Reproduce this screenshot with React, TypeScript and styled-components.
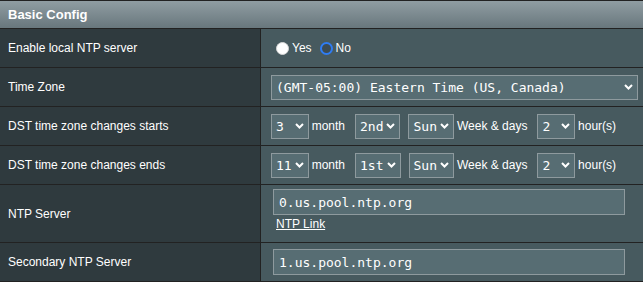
import React from "react";
import styled, { createGlobalStyle } from "styled-components";

const Global = createGlobalStyle`
  html, body { margin: 0; padding: 0; background: #475A5F; }
  body {
    font-family: "Liberation Sans", Arial, sans-serif;
    font-size: 12px;
    color: #fff;
  }
`;

const Table = styled.div`
  width: 643px;
  border-top: 1px solid #222;
`;

const Header = styled.div`
  height: 27px;
  display: flex;
  align-items: center;
  padding-left: 8px;
  background: linear-gradient(#909da2, #68777d);
  border-bottom: 1px solid #222;
  font: bold 13px "Liberation Sans", Arial, sans-serif;
  color: #fff;
`;

const Row = styled.div<{ $h: number }>`
  display: grid;
  grid-template-columns: 261px 1fr;
  height: ${(p) => p.$h}px;
  border-bottom: 1px solid #222;
`;

const Label = styled.div`
  display: flex;
  align-items: center;
  padding-left: 8px;
  background: #2F3A3E;
  border-right: 1px solid #222;
  color: #fff;
`;

const Cell = styled.div<{ $stack?: boolean }>`
  display: flex;
  flex-direction: ${(p) => (p.$stack ? "column" : "row")};
  align-items: ${(p) => (p.$stack ? "flex-start" : "center")};
  justify-content: ${(p) => (p.$stack ? "flex-start" : "flex-start")};
  padding-left: 10px;
  padding-top: ${(p) => (p.$stack ? "4px" : "0")};
  gap: ${(p) => (p.$stack ? "2px" : "0")};
  background: #475A5F;
  white-space: nowrap;
`;

const RadioDot = styled.span<{ $on?: boolean }>`
  box-sizing: border-box;
  display: inline-block;
  width: 13px;
  height: 13px;
  border-radius: 50%;
  margin: 0 3px 0 ${(p) => (p.$on ? 8 : 5)}px;
  background: ${(p) => (p.$on ? "#3d4c52" : "#fff")};
  border: ${(p) => (p.$on ? "2.5px solid #2f7cf2" : "1px solid #d8d8d8")};
`;

const SelectBox = styled.div<{ $w?: number; $ml?: number }>`
  box-sizing: border-box;
  display: inline-flex;
  align-items: center;
  height: 25px;
  width: ${(p) => (p.$w ? `${p.$w}px` : "auto")};
  margin-left: ${(p) => p.$ml ?? 0}px;
  padding: 0 4px 0 4px;
  background: #576D73;
  border: 1px solid #8e9a9e;
  font: 13px "DejaVu Sans Mono", "Liberation Mono", monospace;
  color: #fff;
`;

const SelectText = styled.span<{ $ch?: number }>`
  min-width: ${(p) => (p.$ch ? `${p.$ch}ch` : "0")};
  flex: ${(p) => (p.$ch ? "none" : "1")};
  white-space: pre;
`;

const ChevronWrap = styled.svg`
  margin-left: 3px;
  flex: none;
`;

const Unit = styled.span<{ $ml: number; $mr: number }>`
  margin: 0 ${(p) => p.$mr}px 0 ${(p) => p.$ml}px;
`;

const TextField = styled.input`
  box-sizing: border-box;
  width: 352px;
  height: 26px;
  margin: 0 0 0 2px;
  padding: 0 0 0 5px;
  background: #576D73;
  border: 1px solid #8e9a9e;
  outline: none;
  font: 13px "DejaVu Sans Mono", "Liberation Mono", monospace;
  color: #fff;
`;

const LinkText = styled.a`
  margin-left: 5px;
  line-height: 14px;
  color: #fff;
  text-decoration: underline;
  font: 12px "Liberation Sans", Arial, sans-serif;
`;

const Chevron = () => (
  <ChevronWrap width="9" height="6" viewBox="0 0 9 6">
    <path d="M1 1l3.5 3.5L8 1" stroke="#fff" strokeWidth="2" fill="none" />
  </ChevronWrap>
);

const Select = ({ value, ch, w, ml }: { value: string; ch?: number; w?: number; ml?: number }) => (
  <SelectBox $w={w} $ml={ml}>
    <SelectText $ch={ch}>{value}</SelectText>
    <Chevron />
  </SelectBox>
);

const DstRow = ({ label, month, week }: { label: string; month: string; week: string }) => (
  <Row $h={38}>
    <Label>{label}</Label>
    <Cell>
      <Select value={month} ch={2} />
      <Unit $ml={3} $mr={10}>month</Unit>
      <Select value={week} ch={3} />
      <Select value="Sun" ch={3} ml={8} />
      <Unit $ml={3} $mr={10}>Week &amp; days</Unit>
      <Select value="2" ch={2} />
      <Unit $ml={3} $mr={0}>hour(s)</Unit>
    </Cell>
  </Row>
);

export default function App() {
  return (
    <>
      <Global />
      <Table>
        <Header>Basic Config</Header>
        <Row $h={38}>
          <Label>Enable local NTP server</Label>
          <Cell>
            <RadioDot />
            <span>Yes</span>
            <RadioDot $on />
            <span>No</span>
          </Cell>
        </Row>
        <Row $h={38}>
          <Label>Time Zone</Label>
          <Cell>
            <Select value="(GMT-05:00) Eastern Time (US, Canada)" w={367} />
          </Cell>
        </Row>
        <DstRow label="DST time zone changes starts" month="3" week="2nd" />
        <DstRow label="DST time zone changes ends" month="11" week="1st" />
        <Row $h={57}>
          <Label>NTP Server</Label>
          <Cell $stack>
            <TextField defaultValue="0.us.pool.ntp.org" />
            <LinkText href="#">NTP Link</LinkText>
          </Cell>
        </Row>
        <Row $h={38}>
          <Label>Secondary NTP Server</Label>
          <Cell>
            <TextField defaultValue="1.us.pool.ntp.org" />
          </Cell>
        </Row>
      </Table>
    </>
  );
}
